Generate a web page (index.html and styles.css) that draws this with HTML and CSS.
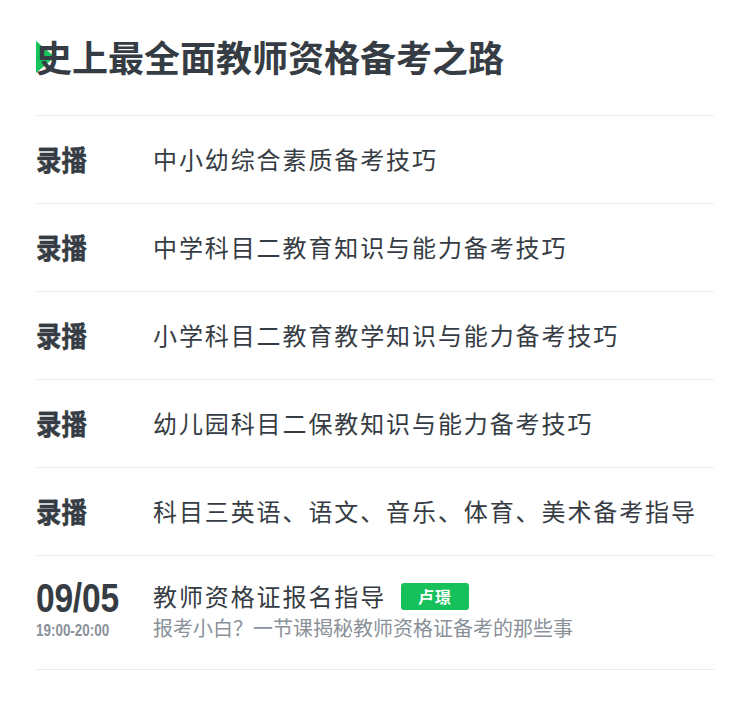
FILE: index.html
```html
<!DOCTYPE html>
<html lang="zh">
<head>
<meta charset="utf-8">
<link rel="stylesheet" href="styles.css">
</head>
<body>
<div class="page">
  <h1 class="title"><span class="marker"></span>史上最全面教师资格备考之路</h1>
  <ul class="list">
    <li class="row"><div class="when"><span class="rec">录播</span></div><div class="info"><div class="name">中小幼综合素质备考技巧</div></div></li>
    <li class="row"><div class="when"><span class="rec">录播</span></div><div class="info"><div class="name">中学科目二教育知识与能力备考技巧</div></div></li>
    <li class="row"><div class="when"><span class="rec">录播</span></div><div class="info"><div class="name">小学科目二教育教学知识与能力备考技巧</div></div></li>
    <li class="row"><div class="when"><span class="rec">录播</span></div><div class="info"><div class="name">幼儿园科目二保教知识与能力备考技巧</div></div></li>
    <li class="row"><div class="when"><span class="rec">录播</span></div><div class="info"><div class="name">科目三英语、语文、音乐、体育、美术备考指导</div></div></li>
    <li class="row live">
      <div class="when"><span class="date">09/05</span><span class="time">19:00-20:00</span></div>
      <div class="info">
        <div class="name">教师资格证报名指导<span class="badge">卢璟</span></div>
        <div class="desc">报考小白？一节课揭秘教师资格证备考的那些事</div>
      </div>
    </li>
  </ul>
</div>
</body>
</html>
```
FILE: styles.css
```css
html, body { margin: 0; padding: 0; background: #fff; }
body { font-family: "Noto Sans CJK SC", "Noto Sans", sans-serif; color: #363c43; }
.page { width: 678px; padding: 0 36px; }
.title {
  position: relative;
  z-index: 0;
  margin: 0;
  height: 116px;
  box-sizing: border-box;
  padding-top: 32px;
  font-size: 36px;
  line-height: 48px;
  font-weight: 700;
  border-bottom: 1px solid #ececec;
}
.marker {
  position: absolute;
  left: 0;
  top: 41px;
  width: 0; height: 0;
  border-top: 16px solid transparent;
  border-bottom: 16px solid transparent;
  border-left: 19px solid #18c25c;
  z-index: -1;
}
.list { list-style: none; margin: 0; padding: 0; }
.row {
  display: flex;
  align-items: center;
  height: 88px;
  box-sizing: border-box;
  padding-bottom: 2px;
  border-bottom: 1px solid #ececec;
}
.when { width: 117px; flex: none; display: flex; flex-direction: column; align-items: flex-start; }
.rec { font-size: 26px; font-weight: 700; line-height: 30px; transform: scale(0.98, 1.1); transform-origin: left center; display: inline-block; -webkit-text-stroke: 0.4px #363c43; }
.info { flex: 1; }
.name { font-size: 24px; letter-spacing: 1.9px; line-height: 32px; display: flex; align-items: center; }
.live { height: 114px; align-items: flex-start; padding-top: 20px; padding-bottom: 0; }
.date, .time {
  display: inline-block;
  font-family: "Liberation Sans", Arial, sans-serif;
  font-weight: 700;
  transform: scaleX(0.84);
  transform-origin: left center;
  white-space: nowrap;
}
.date { font-size: 40px; line-height: 44px; letter-spacing: -0.3px; }
.time { font-size: 16px; line-height: 20px; color: #8a9199; margin-top: 1px; }
.live .info { padding-top: 4px; }
.badge {
  display: inline-block;
  margin-left: 15px;
  width: 68px; height: 27px;
  line-height: 27px;
  text-align: center;
  background: #16c05b;
  color: #fff;
  border-radius: 3px;
  font-size: 16px;
  font-weight: 700;
  letter-spacing: 1px;
}
.desc { font-size: 20px; line-height: 26px; color: #8a9199; margin-top: 3px; }
```
